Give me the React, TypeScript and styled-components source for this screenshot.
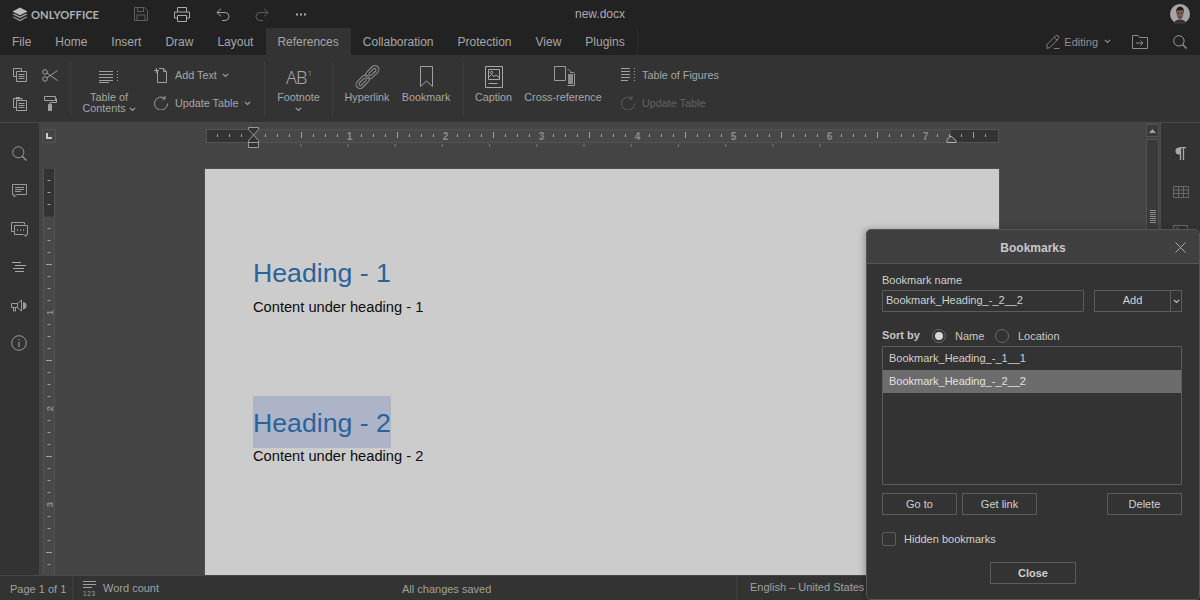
import React from "react";
import styled, { createGlobalStyle } from "styled-components";

const Global = createGlobalStyle`
  html, body { margin: 0; padding: 0; background: #333; }
  * { box-sizing: border-box; }
  body { font-family: "Liberation Sans", Arial, sans-serif; }
`;

const Shell = styled.div`
  position: relative; width: 1200px; height: 600px; overflow: hidden;
  display: flex; flex-direction: column; background: #333; color: #aaa;
  font-family: "Liberation Sans", Arial, sans-serif;
`;
const TitleBar = styled.div`
  position: relative; height: 28px; flex: none; background: #222; display: flex; align-items: center;
`;
const Brand = styled.div`display: flex; align-items: center; gap: 3px; padding-left: 12px; width: 134px;`;
const BrandText = styled.span`font-family: Lato, "Liberation Sans", sans-serif; font-size: 11.2px; font-weight: 700; color: #b0b0b0;`;
const QuickGroup = styled.div`display: flex; align-items: center;`;
const QuickSlot = styled.span<{ $w: number }>`width: ${p => p.$w}px; display: flex; align-items: center; flex: none;`;
const DocName = styled.div`
  position: absolute; left: 0; right: 0; top: 0; height: 28px; line-height: 28px; text-align: center;
  font-size: 12px; color: #aaa; pointer-events: none;
`;
const AvatarSlot = styled.div`margin-left: auto; margin-right: 10px; display: flex;`;

const TabBar = styled.div`height: 27px; flex: none; background: #222; display: flex; align-items: stretch;`;
const Tab = styled.div<{ $on?: boolean }>`
  padding: 0 12px 0 ${p => (p.$on ? "11px" : "12px")}; font-size: 12px; line-height: 28px; color: #a6a6a6; white-space: nowrap;
  border-left: ${p => (p.$on ? "1px solid #222" : "none")};
  background: ${p => (p.$on ? "#333" : "transparent")};
`;
const TabEnd = styled.div`width: 1px; background: #2b2b2b;`;
const TabRight = styled.div`margin-left: auto; display: flex; align-items: center; padding-right: 13px;`;
const EditLabel = styled.span`font-size: 11px; color: #8f8f8f; margin: 0 6px 0 4px;`;
const RightGap = styled.span<{ $w: number }>`width: ${p => p.$w}px; flex: none;`;

const Ribbon = styled.div`height: 67px; flex: none; background: #333; display: flex; padding: 6px 0 5px; font-size: 10.8px; color: #a6a6a6;`;
const Group = styled.div<{ $w: number; $pl?: number; $gap?: number }>`
  width: ${p => p.$w}px; flex: none; display: flex; padding-left: ${p => p.$pl ?? 0}px; gap: ${p => p.$gap ?? 0}px;
`;
const Divider = styled.div`width: 1px; flex: none; margin: 1px 0 1px; background: #3d3d3d;`;
const ClipGrid = styled.div`
  display: grid; grid-template-columns: 30px 30px; grid-template-rows: 28px 28px; padding-left: 5px; align-items: center; justify-items: center;
`;
const BigBtn = styled.div<{ $w?: number }>`
  width: ${p => (p.$w ? p.$w + "px" : "auto")}; flex: none; display: flex; flex-direction: column; align-items: center; text-align: center; white-space: nowrap;
`;
const BigIcon = styled.div<{ $shift?: number }>`
  height: 31px; display: flex; align-items: center; justify-content: center; padding-left: ${p => p.$shift ?? 0}px;
`;
const BigLabel = styled.div`line-height: 11px;`;
const ChevInline = styled.span<{ $gap?: number }>`display: inline-block; vertical-align: 0; margin-left: ${p => p.$gap ?? 0}px;`;
const StackCol = styled.div<{ $ml: number }>`display: flex; flex-direction: column; margin-left: ${p => p.$ml}px;`;
const RowBtn = styled.div<{ $dim?: boolean }>`
  height: 28px; display: flex; align-items: center; white-space: nowrap; color: ${p => (p.$dim ? "#626262" : "#a6a6a6")};
`;
const RowIcon = styled.span`width: 21px; flex: none; display: flex;`;
const FootnoteMark = styled.div`
  font-family: "Noto Sans", sans-serif; font-weight: 300; font-size: 18px; line-height: 20px; letter-spacing: -1px; color: #a8a8a8; padding-top: 0;
  sup { font-size: 8px; line-height: 0; vertical-align: 8px; margin-left: 1px; }
`;

const Workspace = styled.div`flex: 1; min-height: 0; display: flex; border-top: 1px solid #4a4a4a;`;
const LeftRail = styled.div`
  width: 40px; flex: none; background: #333; border-right: 1px solid #464646;
  display: flex; flex-direction: column; align-items: center; padding-top: 19px; gap: 16px; padding-right: 1px;
`;
const RailSlot = styled.div`height: 22px; display: flex; align-items: center; justify-content: center;`;
const Canvas = styled.div`flex: 1; min-width: 0; background: #444; display: flex; flex-direction: column; overflow: hidden;`;
const RulerRow = styled.div`height: 46px; flex: none; display: flex; padding-left: 2px;`;
const Corner = styled.div`
  width: 14px; height: 14px; margin-top: 6px; margin-right: 150px; border: 1px solid #525252; background: #444; position: relative; flex: none;
  display: flex; align-items: center; justify-content: center;
`;
const PageRow = styled.div`flex: 1; min-height: 0; display: flex; padding-left: 3px;`;
const Page = styled.div`
  width: 794px; margin-left: 150px; flex: none; background: #ccc; padding: 78px 0 0 48px; box-shadow: 0 0 0 1px #505050; font-family: "Liberation Sans", Arial, sans-serif;
`;
const Heading = styled.div<{ $sel?: boolean }>`
  display: inline-block; height: 52px; line-height: ${p => (p.$sel ? "54px" : "53px")}; font-size: 26.67px; color: #2a639c; vertical-align: top;
  background: ${p => (p.$sel ? "#aeb4c8" : "transparent")};
`;
const Para = styled.div<{ $after?: number }>`
  font-size: 14.67px; line-height: 17px; color: #0c0c0c; margin-bottom: ${p => p.$after ?? 0}px;
`;
const ScrollCol = styled.div`width: 15px; flex: none; background: #444; padding: 1px 1px 0 1px; display: flex; flex-direction: column; gap: 2px;`;
const ScrollBtn = styled.div`height: 13px; flex: none; border: 1px solid #525252; background: #3a3a3a; display: flex; align-items: center; justify-content: center;`;
const ScrollTrack = styled.div`flex: 1; border: 1px solid #525252; background: #3a3a3a; padding-top: 70px; display: flex; justify-content: center;`;
const RightRail = styled.div`
  width: 40px; flex: none; background: #333; border-left: 1px solid #4a4a4a; display: flex; flex-direction: column; align-items: center; padding-top: 19px; gap: 17px;
`;

const StatusBar = styled.div`
  height: 25px; flex: none; background: #333; border-top: 1px solid #484848; display: flex; align-items: stretch; font-size: 11px; color: #a0a0a0; line-height: 27px;
`;
const PageInfo = styled.div`width: 73px; padding-left: 10px; border-right: 1px solid #3e3e3e; font-size: 11px;`;
const WordCount = styled.div`width: 329px; padding-left: 10px; display: flex; align-items: center; gap: 7px; line-height: 24px;`;
const Saved = styled.div`width: 334px; font-size: 11px;`;
const Lang = styled.div`border-left: 1px solid #3e3e3e; padding-left: 13px; line-height: 23px; white-space: nowrap;`;

const Dialog = styled.div`
  position: absolute; left: 866px; top: 229px; width: 334px; height: 371px; background: #333; border: 1px solid #555; border-radius: 5px;
  display: flex; flex-direction: column; color: #d0d0d0; font-size: 11px; box-shadow: -2px 0 6px rgba(0,0,0,.25); overflow: hidden;
`;
const DialogHead = styled.div`
  position: relative; height: 34px; flex: none; background: #404040; border-bottom: 1px solid #565656;
  font-size: 12px; font-weight: 700; text-align: center; line-height: 36px; color: #c8c8c8;
`;
const CloseX = styled.span`position: absolute; right: 13px; top: 12px; display: flex;`;
const DialogBody = styled.div`flex: 1; padding: 10px 17px 0 15px; display: flex; flex-direction: column;`;
const FieldLabel = styled.div`line-height: 13px; height: 16px; font-size: 11px; color: #cfcfcf;`;
const NameRow = styled.div`display: flex; height: 22px;`;
const TextInput = styled.div`
  width: 202px; flex: none; border: 1px solid #5c5c5c; border-radius: 1px; padding-left: 3px; line-height: 19px; color: #d0d0d0;
`;
const SplitMain = styled.div`
  width: 76px; margin-left: 10px; border: 1px solid #5c5c5c; border-right: none; text-align: center; line-height: 19px; color: #d4d4d4;
`;
const SplitArrow = styled.div`width: 12px; border: 1px solid #5c5c5c; display: flex; align-items: center; justify-content: center;`;
const SortRow = styled.div`display: flex; align-items: center; height: 20px; margin-top: 14px; color: #c8c8c8;`;
const SortTitle = styled.span`font-weight: 700; width: 50px; color: #c4c4c4; position: relative; top: -1px;`;
const Radio = styled.span<{ $on?: boolean }>`
  width: 14px; height: 14px; flex: none; border-radius: 50%; border: 1px solid #6a6a6a; display: flex; align-items: center; justify-content: center;
  &::after { content: ""; width: 8px; height: 8px; border-radius: 50%; background: ${p => (p.$on ? "#d8d8d8" : "transparent")}; }
`;
const RadioText = styled.span<{ $w: number }>`margin-left: 9px; width: ${p => p.$w}px; flex: none;`;
const ListBox = styled.div`height: 139px; border: 1px solid #5c5c5c; border-radius: 1px; overflow: hidden;`;
const ListRow = styled.div<{ $on?: boolean }>`
  height: 23px; line-height: 23px; padding-left: 6px; background: ${p => (p.$on ? "#6c6c6c" : "transparent")}; color: ${p => (p.$on ? "#e2e2e2" : "#d0d0d0")};
`;
const ActionRow = styled.div`display: flex; margin-top: 8px; gap: 5px;`;
const Btn = styled.div<{ $w: number; $push?: boolean; $bold?: boolean }>`
  width: ${p => p.$w}px; height: 22px; border: 1px solid #5c5c5c; text-align: center; line-height: 20px; color: #d0d0d0; flex: none;
  font-weight: ${p => (p.$bold ? 700 : 400)};
  margin-left: ${p => (p.$push ? "auto" : "0")};
`;
const CheckRow = styled.div`display: flex; align-items: center; margin-top: 16px; gap: 8px; height: 16px; color: #cfcfcf;`;
const CheckBox = styled.span`width: 14px; height: 14px; border: 1px solid #5c5c5c; border-radius: 2px; flex: none;`;
const CloseRow = styled.div`display: flex; justify-content: center; margin-top: 15px; padding-left: 2px;`;

const Svg = styled.svg<{ $c?: string }>`
  display: block; flex: none; color: ${p => p.$c ?? "#9a9a9a"}; fill: none; stroke: currentColor; stroke-width: 1;
`;

type IP = { c?: string };
const I = ({ w, h, c, children }: { w: number; h: number; c?: string; children: React.ReactNode }) => (
  <Svg $c={c} width={w} height={h} viewBox={`0 0 ${w} ${h}`}>{children}</Svg>
);

const Logo = () => (
  <I w={16} h={15} c="#aaa">
    <path d="M8 8.200 .5 4.500 8 .6l7.500 3.900z" fill="#bdbdbd" stroke="none" />
    <path d="M2 6.400 8 9.400l6-3 1.500.8L8 11 .5 7.200z" fill="#a4a4a4" stroke="none" />
    <path d="M2 9.400 8 12.400l6-3 1.500.8L8 14.400.5 10.200z" fill="#828282" stroke="none" />
  </I>
);
const Save = ({ c }: IP) => (
  <I w={14} h={14} c={c}><path d="M.5.500h10l3 3v10H.5z" /><path d="M3.500.5v4h6v-4M3 13.500V8h8v5.500" /></I>
);
const Print = () => (
  <I w={16} h={15} c="#aaa"><path d="M3.500 5V.5h9V5M3.500 11H.5V5h15v6h-3" /><path d="M3.500 8.500h9v6h-9z" /></I>
);
const Undo = ({ c, flip }: IP & { flip?: boolean }) => (
  <I w={14} h={13} c={c}>
    <g transform={flip ? "matrix(-1 0 0 1 14 0)" : undefined}><path d="M5 .8.8 4.500 5 8.200M1 4.500h8a4 4 0 0 1 0 8H6" /></g>
  </I>
);
const Dots = () => (
  <I w={10} h={3} c="#aaa"><g fill="#aaa" stroke="none"><rect y=".5" width="2" height="2" /><rect x="4" y=".5" width="2" height="2" /><rect x="8" y=".5" width="2" height="2" /></g></I>
);
const Avatar = () => (
  <svg width="20" height="20" viewBox="0 0 20 20">
    <circle cx="10" cy="10" r="10" fill="#a5a5a5" />
    <path d="M4 20c.6-3.500 3-4.500 6-4.500s5.400 1 6 4.500z" fill="#333" />
    <ellipse cx="10" cy="9.500" rx="3.400" ry="5.500" fill="#7d5d50" />
    <path d="M6.200 9.500C5.500 4.500 8 2.800 10.300 2.800c2.600 0 4 2 3.500 6.700-.4-1.700-.8-3.200-1.300-3.600C10.500 6.500 8 6 7.200 6.200 6.700 7 6.500 8 6.200 9.500z" fill="#221e1c" />
    <path d="M7.600 9.200h1.600M10.900 9.200h1.600" stroke="#221e1c" strokeWidth=".9" />
    <path d="M8.500 13c1 .5 2.200.5 3.100 0" stroke="#2e211d" strokeWidth=".8" fill="none" />
  </svg>
);
const Pencil = () => (
  <I w={14} h={14} c="#808080"><path d="M1 9.500 9.500 1a1.800 1.800 0 0 1 2.800 2.800L4 12.500l-3 .8zM8.500 2.500l2.800 2.800M8 13.500h5.500" /></I>
);
const Chevron = ({ c }: IP) => (
  <I w={7} h={5} c={c}><path d="M.8.800 3.500 3.500 6.200.800" strokeWidth="1.100" /></I>
);
const FolderMove = () => (
  <I w={16} h={14} c="#8c8c8c"><path d="M.5 13.500V.5h5.500l1.500 2h8v11z" /><path d="M4 8h7M8.500 5.500 11 8l-2.500 2.500" /></I>
);
const Search = ({ c, s = 14 }: IP & { s?: number }) => (
  <I w={s} h={s} c={c}><circle cx={s * 0.42} cy={s * 0.42} r={s * 0.37} /><path d={`M${s * 0.68} ${s * 0.68}L${s - 0.5} ${s - 0.5}`} strokeWidth="1.300" /></I>
);
const Copy = () => (
  <I w={14} h={14} c="#a0a0a0"><path d="M3.500 8.500H.5v-8h8v3" /><path d="M3.500 3.500h10v10h-10zM5.500 6.500h6M5.500 8.500h6M5.500 10.500h6" /></I>
);
const Paste = () => (
  <I w={14} h={15} c="#a0a0a0"><path d="M3.500 11.500h-3v-9h2.500M7 2.500h2v2" /><path d="M3 1h4v2.500H3z" fill="#a0a0a0" stroke="none" /><path d="M3.500 4.500h10v10h-10zM5.500 7.500h6M5.500 9.500h6M5.500 11.500h6" /></I>
);
const Scissors = () => (
  <I w={16} h={13} c="#a0a0a0"><circle cx="3" cy="3" r="2.300" /><circle cx="3" cy="10" r="2.300" /><path d="M5 4.200 15.500 11.500M5 8.800 15.500 1.500" /></I>
);
const Painter = () => (
  <I w={13} h={15} c="#a0a0a0"><path d="M.5.500h11v4h-11zM11.500 2.500h1v4h-6.500v2" /><path d="M4.500 8.500h3v6h-3z" fill="#a0a0a0" /></I>
);
const Toc = () => (
  <I w={21} h={12} c="#a0a0a0">
    <path d="M0 .5h14M0 3.500h14M0 6.500h14M0 9.500h14M0 11.500h10" />
    <path d="M18.500 0v12" strokeDasharray="1 2" />
  </I>
);
const FigureList = () => (
  <I w={15} h={14} c="#a0a0a0">
    <path d="M0 .5h9M0 3.500h9M0 6.500h9M0 9.500h9M0 12.500h7" />
    <path d="M13.500 0v14" strokeDasharray="1 2" />
  </I>
);
const AddPage = () => (
  <I w={13} h={15} c="#a0a0a0"><path d="M3.500 2.500v12h9V3.500h-3v-3H5M9.500.500l3 3" /><path d="M2.500 0v5M0 2.500h5" /></I>
);
const Refresh = ({ c, s = 14 }: IP & { s?: number }) => (
  <I w={s} h={s} c={c}><path d="M10.800 2.300A6.500 6.500 0 1 0 13.500 7.500" /><path d="M11 0v3H8" /></I>
);
const Link = () => (
  <I w={25} h={24} c="#8a8a8a">
    <g transform="rotate(-45 12.500 12)" strokeWidth="1.100">
      <rect x="-2" y="8" width="15.500" height="8" rx="4" />
      <rect x="11.500" y="8" width="15.500" height="8" rx="4" />
      <rect x="1" y="10.500" width="9" height="3" rx="1.500" />
      <rect x="15" y="10.500" width="9" height="3" rx="1.500" />
    </g>
  </I>
);
const BookmarkIcon = () => (
  <I w={13} h={21} c="#a0a0a0"><path d="M.5.500h12v20l-6-5.500-6 5.500z" /></I>
);
const CaptionIcon = () => (
  <I w={18} h={22} c="#a8a8a8">
    <path d="M.5.500h17v21H.5z" /><path d="M3.500 3.500h11v10h-11zM3.500 11.500l3-3 2.500 2 2-1.500 3.500 3" /><circle cx="6.500" cy="6.500" r="1.200" /><path d="M3.500 17.500h9" />
  </I>
);
const CrossRef = () => (
  <I w={22} h={21} c="#9a9a9a">
    <path d="M.5.500h11v14H.5z" /><path d="M13.500 3.500h1l2 2v1h3l1 1v12h-7" />
    <path d="M14 8h5v10h-5z" fill="#8a8a8a" stroke="none" />
  </I>
);
const Comment = () => (
  <I w={15} h={14} c="#9a9a9a"><path d="M.5.500h14v10H5l-3 2.500v-2.500H.5z" /><path d="M3 3.500h9M3 5.500h9M3 7.500h6" /></I>
);
const Chat = () => (
  <I w={17} h={15} c="#9a9a9a">
    <path d="M3 9.500H.5V.5h13v2" /><path d="M3.500 3.500h13v9H15v2l-2.500-2h-9z" fill="#333" /><path d="M6 8h1M9 8h1M12 8h1" strokeWidth="1.500" />
  </I>
);
const NavList = () => (
  <I w={14} h={11} c="#a8a8a8"><path d="M0 .5h9M3 3.500h11M1 6.500h11M3 9.500h9" /></I>
);
const Megaphone = () => (
  <I w={16} h={13} c="#9a9a9a"><path d="M.5 4.500h6v4h-6zM2.500 8.500v3.500h2V8.500M6.500 4.500l4-3.500v11l-4-3.500" /><path d="M12 3c2.800.5 3.500 1.500 3.500 3.500S14.800 10 12 10.500z" fill="#9a9a9a" stroke="none" /></I>
);
const Info = () => (
  <I w={16} h={16} c="#9a9a9a"><circle cx="8" cy="8" r="7.300" /><path d="M8 7v5" strokeWidth="1.200" /><path d="M8 4.200v1.200" strokeWidth="1.200" /></I>
);
const Pilcrow = () => (
  <I w={11} h={13} c="#a8a8a8"><path d="M7 .5H4a3.500 3.500 0 0 0 0 7h1.500V.5z" fill="#a8a8a8" stroke="none" /><path d="M5.500 .5V13M8.500 .5V13M5 .5h6" strokeWidth="1.300" /></I>
);
const TableIcon = () => (
  <I w={16} h={12} c="#686868"><path d="M.5.500h15v11H.5zM.5 4h15M.5 7.500h15M5.500.500v11M10.500.500v11" /></I>
);
const ImageIcon = () => (
  <I w={15} h={12} c="#686868"><path d="M.5.500h14v11H.5z" /><circle cx="4.500" cy="3.800" r="1.200" /></I>
);
const WordIcon = () => (
  <I w={13} h={15} c="#a0a0a0">
    <path d="M0 .5h13M0 3.500h13M0 6.500h9" />
    <text x="0" y="14.500" fontSize="6.500" fill="#a0a0a0" stroke="none" fontFamily="Liberation Sans, sans-serif" letterSpacing=".6">123</text>
  </I>
);
const Times = () => (
  <I w={11} h={11} c="#a8a8a8"><path d="M.5.500l10 10M10.500.500l-10 10" /></I>
);

const range = (n: number) => Array.from({ length: n }, (_, i) => i);

const HRuler = () => {
  const x0 = 47.5;
  return (
    <svg width="794" height="46" viewBox="0 0 794 46" style={{ display: "block", flex: "none" }}>
      <rect x=".5" y="6.500" width="792" height="13" fill="#484848" stroke="#545454" />
      <rect x="1" y="7" width="47" height="12" fill="#333" />
      <rect x="745" y="7" width="47" height="12" fill="#333" />
      {range(66).map(i => {
        const n = i - 3;
        const x = x0 + n * 12;
        const m = ((n % 8) + 8) % 8;
        if (n === 0 || x > 790) return null;
        if (m === 0) {
          return (
            <text key={i} x={x} y="17" fontSize="10" textAnchor="middle" fill="#8c8c8c" fontFamily="Liberation Sans, sans-serif" fontWeight="700">{n / 8}</text>
          );
        }
        return <path key={i} d={m === 4 ? `M${x} 9v6` : `M${x} 11v3`} stroke="#a0a0a0" />;
      })}
      {range(12).map(i => (
        <path key={i} d={`M${94.800 + i * 47.200} 21v3`} stroke="#7c7c7c" strokeWidth="1" />
      ))}
      <path d="M42.500 4.500h10v2l-5 5.500-5-5.500z" fill="#333" stroke="#9a9a9a" />
      <path d="M47.500 12l5 5.500v2h-10v-2z" fill="#333" stroke="#9a9a9a" />
      <path d="M42.500 19.500h10v5h-10z" fill="#333" stroke="#9a9a9a" />
      <path d="M741 19.500v-3l4-3.500 5 4.500v2z" fill="#444" stroke="#b0b0b0" />
    </svg>
  );
};

const VRuler = () => (
  <svg width="12" height="406" viewBox="0 0 12 406" style={{ display: "block", flex: "none" }}>
    <rect x=".5" y="-.5" width="11" height="408" fill="#484848" stroke="#525252" />
    <rect x="1" y="0" width="10" height="47.500" fill="#333" />
    {range(34).map(i => {
      const n = i - 3;
      const y = 47.500 + n * 12;
      const m = ((n % 8) + 8) % 8;
      if (n === 0) return null;
      if (m === 0) {
        return (
          <text key={i} x="0" y="0" fontSize="9.500" textAnchor="middle" fill="#8c8c8c" fontFamily="Liberation Sans, sans-serif" fontWeight="700" transform={`translate(9.500 ${y}) rotate(-90)`}>{n / 8}</text>
        );
      }
      return <path key={i} d={m === 4 ? `M3 ${y}h6` : `M4.500 ${y}h3`} stroke="#a0a0a0" />;
    })}
  </svg>
);

const tabs = ["File", "Home", "Insert", "Draw", "Layout", "References", "Collaboration", "Protection", "View", "Plugins"];

export default function App() {
  return (
    <Shell>
      <Global />
      <TitleBar>
        <Brand><Logo /><BrandText>ONLYOFFICE</BrandText></Brand>
        <QuickGroup>
          <QuickSlot $w={40}><Save c="#5e5e5e" /></QuickSlot>
          <QuickSlot $w={42}><Print /></QuickSlot>
          <QuickSlot $w={39}><Undo c="#a0a0a0" /></QuickSlot>
          <QuickSlot $w={41}><Undo c="#5e5e5e" flip /></QuickSlot>
          <QuickSlot $w={10}><Dots /></QuickSlot>
        </QuickGroup>
        <DocName>new.docx</DocName>
        <AvatarSlot><Avatar /></AvatarSlot>
      </TitleBar>
      <TabBar>
        {tabs.map(t => <Tab key={t} $on={t === "References"}>{t}</Tab>)}
        <TabEnd />
        <TabRight>
          <Pencil />
          <EditLabel>Editing</EditLabel>
          <Chevron c="#909090" />
          <RightGap $w={21} />
          <FolderMove />
          <RightGap $w={25} />
          <Search c="#9a9a9a" />
        </TabRight>
      </TabBar>
      <Ribbon>
        <Group $w={70}>
          <ClipGrid>
            <Copy /><Scissors />
            <Paste /><Painter />
          </ClipGrid>
        </Group>
        <Divider />
        <Group $w={193} $pl={11}>
          <BigBtn $w={54}>
            <BigIcon><Toc /></BigIcon>
            <BigLabel>Table of<br />Contents<ChevInline $gap={3}><Chevron c="#a0a0a0" /></ChevInline></BigLabel>
          </BigBtn>
          <StackCol $ml={18}>
            <RowBtn><RowIcon><AddPage /></RowIcon>Add Text<RightGap $w={5} /><Chevron c="#a0a0a0" /></RowBtn>
            <RowBtn><RowIcon><Refresh c="#a0a0a0" /></RowIcon>Update Table<RightGap $w={6} /><Chevron c="#a0a0a0" /></RowBtn>
          </StackCol>
        </Group>
        <Divider />
        <Group $w={67}>
          <BigBtn $w={67}>
            <BigIcon><FootnoteMark>AB<sup>1</sup></FootnoteMark></BigIcon>
            <BigLabel>Footnote</BigLabel>
            <BigLabel><ChevInline><Chevron c="#a0a0a0" /></ChevInline></BigLabel>
          </BigBtn>
        </Group>
        <Divider />
        <Group $w={130} $pl={11} $gap={11}>
          <BigBtn $w={46}><BigIcon><Link /></BigIcon><BigLabel>Hyperlink</BigLabel></BigBtn>
          <BigBtn $w={50}><BigIcon><BookmarkIcon /></BigIcon><BigLabel>Bookmark</BigLabel></BigBtn>
        </Group>
        <Divider />
        <Group $w={300} $pl={11} $gap={12}>
          <BigBtn $w={37}><BigIcon><CaptionIcon /></BigIcon><BigLabel>Caption</BigLabel></BigBtn>
          <BigBtn $w={78}><BigIcon $shift={3}><CrossRef /></BigIcon><BigLabel>Cross-reference</BigLabel></BigBtn>
          <StackCol $ml={7}>
            <RowBtn><RowIcon><FigureList /></RowIcon>Table of Figures</RowBtn>
            <RowBtn $dim><RowIcon><Refresh c="#5e5e5e" /></RowIcon>Update Table</RowBtn>
          </StackCol>
        </Group>
      </Ribbon>
      <Workspace>
        <LeftRail>
          <RailSlot><Search c="#9a9a9a" s={15} /></RailSlot>
          <RailSlot><Comment /></RailSlot>
          <RailSlot><Chat /></RailSlot>
          <RailSlot><NavList /></RailSlot>
          <RailSlot><Megaphone /></RailSlot>
          <RailSlot><Info /></RailSlot>
        </LeftRail>
        <Canvas>
          <RulerRow>
            <Corner>
              <I w={6} h={6} c="#c8c8c8"><path d="M1 0v5h5" strokeWidth="2" /></I>
            </Corner>
            <HRuler />
          </RulerRow>
          <PageRow>
            <VRuler />
            <Page>
              <Heading>Heading - 1</Heading>
              <Para $after={80}>Content under heading - 1</Para>
              <Heading $sel>Heading - 2</Heading>
              <Para>Content under heading - 2</Para>
            </Page>
          </PageRow>
        </Canvas>
        <ScrollCol>
          <ScrollBtn>
            <I w={7} h={4} c="#a0a0a0"><path d="M0 4 3.500 0 7 4z" fill="#a0a0a0" stroke="none" /></I>
          </ScrollBtn>
          <ScrollTrack>
            <I w={6} h={13} c="#8c8c8c"><path d="M0 .5h6M0 2.500h6M0 4.500h6M0 6.500h6M0 8.500h6M0 10.500h6M0 12.500h6" /></I>
          </ScrollTrack>
        </ScrollCol>
        <RightRail>
          <RailSlot><Pilcrow /></RailSlot>
          <RailSlot><TableIcon /></RailSlot>
          <RailSlot><ImageIcon /></RailSlot>
        </RightRail>
      </Workspace>
      <StatusBar>
        <PageInfo>Page 1 of 1</PageInfo>
        <WordCount><WordIcon />Word count</WordCount>
        <Saved>All changes saved</Saved>
        <Lang>English – United States</Lang>
      </StatusBar>
      <Dialog>
        <DialogHead>Bookmarks<CloseX><Times /></CloseX></DialogHead>
        <DialogBody>
          <FieldLabel>Bookmark name</FieldLabel>
          <NameRow>
            <TextInput>Bookmark_Heading_-_2__2</TextInput>
            <SplitMain>Add</SplitMain>
            <SplitArrow><Chevron c="#c0c0c0" /></SplitArrow>
          </NameRow>
          <SortRow>
            <SortTitle>Sort by</SortTitle>
            <Radio $on /><RadioText $w={40}>Name</RadioText>
            <Radio /><RadioText $w={50}>Location</RadioText>
          </SortRow>
          <ListBox>
            <ListRow>Bookmark_Heading_-_1__1</ListRow>
            <ListRow $on>Bookmark_Heading_-_2__2</ListRow>
          </ListBox>
          <ActionRow>
            <Btn $w={75}>Go to</Btn>
            <Btn $w={75}>Get link</Btn>
            <Btn $w={75} $push>Delete</Btn>
          </ActionRow>
          <CheckRow><CheckBox />Hidden bookmarks</CheckRow>
          <CloseRow><Btn $w={86} $bold>Close</Btn></CloseRow>
        </DialogBody>
      </Dialog>
    </Shell>
  );
}
